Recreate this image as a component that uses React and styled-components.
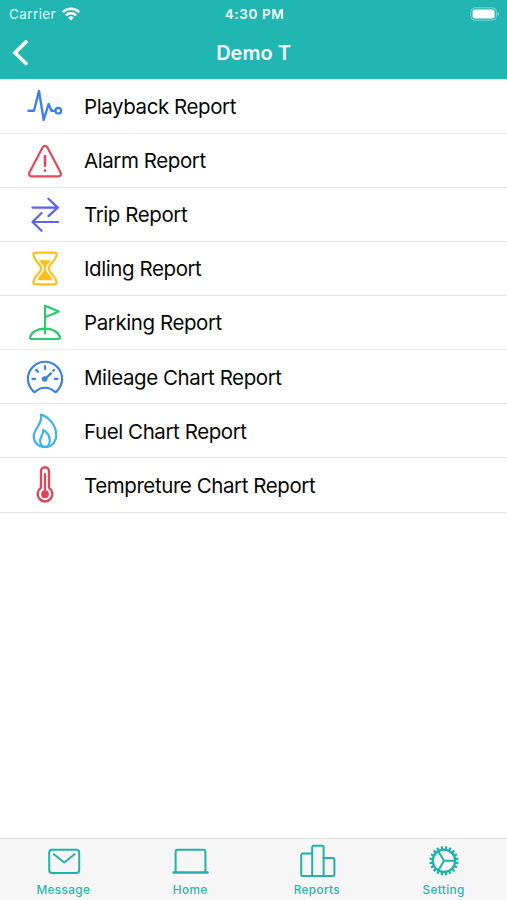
import styled, { createGlobalStyle } from 'styled-components';

const GlobalStyle = createGlobalStyle`
  * {
    box-sizing: border-box;
  }

  body {
    margin: 0;
    background-color: #fff;
    font-family: Inter, "Liberation Sans", sans-serif;
  }
`;

const Screen = styled.div`
  display: flex;
  flex-direction: column;
  width: 100%;
  height: 100vh;
  overflow: hidden;
  background-color: #fff;
`;

const Header = styled.header`
  flex: none;
  height: 79px;
  color: #f4fffe;
  background-color: #21b6b1;
`;

const StatusBar = styled.div`
  display: grid;
  grid-template-columns: 1fr auto 1fr;
  align-items: center;
  height: 27px;
  padding: 0 7px 0 9px;
  font-size: 13px;
  line-height: 28px;
`;

const Carrier = styled.div`
  display: flex;
  align-items: center;
  gap: 6px;
  font-size: 13.5px;
  letter-spacing: 0.4px;
  color: #d9fffc;
`;

const Clock = styled.div`
  font-size: 13.5px;
  font-weight: 600;
  letter-spacing: 0.6px;
`;

const Battery = styled.svg`
  justify-self: end;
`;

const NavBar = styled.div`
  display: grid;
  grid-template-columns: 1fr auto 1fr;
  align-items: center;
  height: 51px;
  padding: 0 12px;
`;

const BackButton = styled.button`
  display: flex;
  width: 18px;
  height: 28px;
  padding: 0;
  border: 0;
  color: #fff;
  background: none;
`;

const Title = styled.h1`
  margin: 0;
  font-size: 20px;
  font-weight: 600;
`;

const ReportList = styled.ul`
  flex: 1;
  margin: 0;
  padding: 0.5px 0 0;
  list-style: none;
`;

const ReportRow = styled.li`
  display: flex;
  align-items: center;
  gap: 19px;
  height: 54.15px;
  padding: 0.6px 0 0 25px;
  border-bottom: 1px solid #e9e9e9;
  font-size: 20.5px;
  letter-spacing: -0.42px;
  color: #080808;
`;

const ReportIcon = styled.svg`
  flex: none;
  width: 40px;
  height: 40px;
  fill: none;
  stroke: ${(props) => props.$color};
  stroke-width: 2.2;
  stroke-linecap: round;
  stroke-linejoin: round;
  color: ${(props) => props.$color};
`;

const TabBar = styled.nav`
  display: grid;
  grid-template-columns: repeat(4, 1fr);
  flex: none;
  height: 62px;
  border-top: 1px solid #e4e4e4;
  background-color: #f6f6f6;
`;

const Tab = styled.a`
  display: flex;
  flex-direction: column;
  align-items: center;
  padding-top: 2px;
  font-size: 11.8px;
  font-weight: 500;
  line-height: 18px;
  letter-spacing: 0.35px;
  color: #2cb5ac;
`;

const TabIcon = styled.svg`
  width: 40px;
  height: 40px;
  fill: none;
  stroke: #21b2aa;
  stroke-width: 2;
  stroke-linecap: round;
  stroke-linejoin: round;
`;

const reports = [
  {
    name: 'Playback Report',
    color: '#3b82f0',
    icon: (
      <>
        <path strokeWidth="2.4" d="M3.5 24.7H9L14 5l4.7 29L23.6 18l2.8 6.7h3.6" />
        <circle cx="33.3" cy="24.7" r="2.8" />
      </>
    ),
  },
  {
    name: 'Alarm Report',
    color: '#e5475a',
    icon: (
      <>
        <path d="M17.7 6.2 4.4 31.4c-1 2 .1 3.9 2.4 3.9h26.4c2.3 0 3.4-1.9 2.4-3.9L22.3 6.2c-1.1-1.9-3.5-1.9-4.6 0Z" />
        <path strokeWidth="2.6" d="M20 15v9.7M20 29.5v.2" />
      </>
    ),
  },
  {
    name: 'Trip Report',
    color: '#5b62ee',
    icon: <path d="M7.5 12.6H33M23.4 3.8l9.4 8.8-9.4 8.5M33 27H7.5M16.6 18l-9.1 9 9.1 8.8" />,
  },
  {
    name: 'Idling Report',
    color: '#fbc01d',
    icon: (
      <>
        <path d="M10.5 3.6h19c1.7 0 2.2 1 2 2.3-.9 6.7-7.8 9.4-7.8 13.7S30.6 26.2 31.5 33c.2 1.5-.4 2.4-2 2.4h-19c-1.6 0-2.2-.9-2-2.4.9-6.8 7.8-9.2 7.8-13.4S9.4 12.6 8.500 5.900c-.2-1.300.3-2.300 2-2.300Z" />
        <path
          fill="currentColor"
          strokeWidth=".6"
          d="M14.5 11.5h11c-1.700 3-4.600 4.500-4.900 8.200.2 5.200 5.400 5.600 6.400 11.300H13c1-5.700 6.200-6.100 6.400-11.300-.3-3.700-3.200-5.200-4.900-8.200Z"
        />
      </>
    ),
  },
  {
    name: 'Parking Report',
    color: '#2fca70',
    icon: (
      <>
        <path d="M20 30.500V2.800l13.700 5.700L20 14.300" />
        <path d="M6.500 36h27c1.300 0 1.700-.8 1.400-2-1.300-5-7.500-8.300-14.900-8.300S6.400 29 5.100 34c-.3 1.200.1 2 1.400 2Z" />
      </>
    ),
  },
  {
    name: 'Mileage Chart Report',
    color: '#3b80eb',
    icon: (
      <>
        <path d="M8.400 34.400a17.100 17.100 0 1 1 23.200 0c-.7.700-1.500.6-2.200.1-5.500-5-13.300-5-18.800 0-.7.500-1.500.6-2.200-.1Z" />
        <path d="M20 9.200v2.800M11.100 12.700l1.900 2.100M7.500 21.900h2.600M29.900 21.900h2.600M28.900 12.900l-.8.900" />
        <path d="m20.500 21.400 5.500-5" />
        <circle cx="19.700" cy="22" r="1.700" fill="currentColor" />
      </>
    ),
  },
  {
    name: 'Fuel Chart Report',
    color: '#3cb3ec',
    icon: (
      <>
        <path d="M16 3.600c7.500 2.200 15.200 10.500 15.200 20.200 0 7.500-4.700 12.200-11.200 12.200S8.700 31.500 8.700 25C8.700 17.600 18.300 13 16 3.600Z" />
        <path d="M18 18.900c3.900 1.600 6.800 6.200 6.800 10.300s-2 6.600-4.800 6.600-4.900-2.500-4.900-6.300 3.800-5.400 2.900-10.600Z" />
      </>
    ),
  },
  {
    name: 'Tempreture Chart Report',
    color: '#df4659',
    icon: (
      <>
        <path strokeWidth="2.4" d="M16 22.800V6.300a4 4 0 0 1 8 0v16.500a7.400 7.400 0 1 1-8 0Z" />
        <path d="M20 9v18.500" />
        <circle cx="20" cy="29.200" r="2.8" fill="currentColor" />
      </>
    ),
  },
];

const gearTeeth = Array.from({ length: 20 }, (_, i) => i * 18);

const tabs = [
  {
    name: 'Message',
    icon: (
      <>
        <rect x="6.200" y="8.800" width="30" height="23.200" rx="3" />
        <path d="m10.800 13.200 10.400 8.300 10.400-8.300" />
      </>
    ),
  },
  {
    name: 'Home',
    icon: (
      <>
        <path d="M5.600 31V10.800c0-1.400.7-2.100 2.100-2.100h25.600c1.400 0 2.100.7 2.100 2.100V31" />
        <path strokeWidth="2.4" d="M3.500 31.500h34" />
      </>
    ),
  },
  {
    name: 'Reports',
    icon: (
      <>
        <path d="M15 12.400H6.200a2 2 0 0 0-2 2v19a1.600 1.600 0 0 0 1.600 1.600h30a1.600 1.600 0 0 0 1.600-1.600V18.700a1.600 1.600 0 0 0-1.600-1.600h-9.200" />
        <path d="M15.200 35V6.200a1.500 1.500 0 0 1 1.500-1.500h8.400a1.500 1.500 0 0 1 1.500 1.500V35" />
      </>
    ),
  },
  {
    name: 'Setting',
    icon: (
      <>
        <circle cx="20" cy="19.800" r="11.200" strokeWidth="2.3" />
        <path strokeLinecap="butt" d="M20 19.800h11M20 19.800l-5.600-9.600M20 19.800l-5.600 9.600" />
        {gearTeeth.map((angle) => (
          <path
            key={angle}
            strokeLinecap="butt"
            strokeWidth="2.3"
            d="M20 8.800V5.200"
            transform={`rotate(${angle + 9} 20 19.800)`}
          />
        ))}
      </>
    ),
  },
];

const App = () => (
  <>
    <GlobalStyle />
    <Screen>
      <Header>
        <StatusBar>
          <Carrier>
            Carrier
            <svg width="18" height="14" viewBox="0 0 18 14" fill="none" stroke="#fff" strokeWidth="2.5">
              <path d="M.9 5.200a11.500 11.500 0 0 1 16.200 0" />
              <path d="M3.900 8.400a7.200 7.200 0 0 1 10.200 0" />
              <path d="M9 13.500 6.100 10.600a4.100 4.100 0 0 1 5.800 0Z" fill="#fff" stroke="none" />
            </svg>
          </Carrier>
          <Clock>4:30 PM</Clock>
          <Battery width="30" height="14" viewBox="0 0 30 14">
            <rect x=".8" y=".8" width="25.600" height="12.400" rx="3.800" fill="none" stroke="#7cd5d1" />
            <rect x="2.600" y="2.600" width="22" height="8.800" rx="2.200" fill="#fff" />
            <path d="M27.600 4.800c1.900.8 1.900 3.600 0 4.400Z" fill="#7cd5d1" />
          </Battery>
        </StatusBar>
        <NavBar>
          <BackButton aria-label="Back">
            <svg width="18" height="28" viewBox="0 0 18 28" fill="none" stroke="currentColor" strokeWidth="3.6">
              <path d="M14 2.900 3 13.700l11 10.800" strokeLinecap="round" />
            </svg>
          </BackButton>
          <Title>Demo T</Title>
        </NavBar>
      </Header>
      <ReportList>
        {reports.map((report) => (
          <ReportRow key={report.name}>
            <ReportIcon viewBox="0 0 40 40" $color={report.color}>
              {report.icon}
            </ReportIcon>
            {report.name}
          </ReportRow>
        ))}
      </ReportList>
      <TabBar>
        {tabs.map((tab) => (
          <Tab key={tab.name}>
            <TabIcon viewBox="0 0 40 40">{tab.icon}</TabIcon>
            {tab.name}
          </Tab>
        ))}
      </TabBar>
    </Screen>
  </>
);

export default App;
